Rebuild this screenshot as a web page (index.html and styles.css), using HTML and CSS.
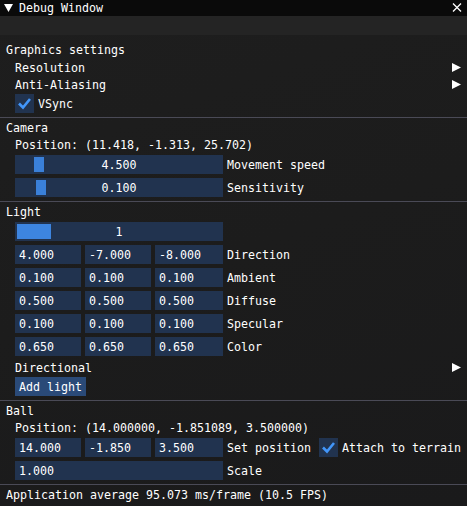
FILE: index.html
```html
<!DOCTYPE html>
<html>
<head>
<meta charset="utf-8">
<link rel="stylesheet" href="styles.css">
</head>
<body>
<div class="win">
  <div class="titlebar">
    <svg class="tri" width="9" height="8" viewBox="0 0 9 8"><polygon points="0,0 9,0 4.5,8" fill="#fff"/></svg>
    <span class="title">Debug Window</span>
    <svg class="close" width="10" height="9" viewBox="0 0 10 9"><path d="M1 0.5 L9 8.5 M9 0.5 L1 8.5" stroke="#fff" stroke-width="1.3" fill="none"/></svg>
  </div>
  <div class="menubar"></div>
  <div class="content">
    <div class="txt">Graphics settings</div>
    <div class="indent">
      <div class="menu-item"><span class="mtxt">Resolution</span><svg class="arrow" width="9" height="9" viewBox="0 0 9 9"><polygon points="0,0 9,4.5 0,9" fill="#fff"/></svg></div>
      <div class="menu-item"><span class="mtxt">Anti-Aliasing</span><svg class="arrow" width="9" height="9" viewBox="0 0 9 9"><polygon points="0,0 9,4.5 0,9" fill="#fff"/></svg></div>
      <div class="check-row">
        <span class="box"><svg width="19" height="19" viewBox="0 0 19 19"><path d="M4 9.5 L8 13.5 L15 5" stroke="#4296fa" stroke-width="2.6" fill="none"/></svg></span>
        <span class="lbl">VSync</span>
      </div>
    </div>
    <div class="sep"></div>
    <div class="txt">Camera</div>
    <div class="indent">
      <div class="txt">Position: (11.418, -1.313, 25.702)</div>
      <div class="row">
        <div class="frame slider wide"><span class="grab" style="left:19px"></span><span class="val">4.500</span></div>
        <span class="lbl">Movement speed</span>
      </div>
      <div class="row">
        <div class="frame slider wide"><span class="grab" style="left:21px"></span><span class="val">0.100</span></div>
        <span class="lbl">Sensitivity</span>
      </div>
    </div>
    <div class="sep"></div>
    <div class="txt">Light</div>
    <div class="indent">
      <div class="row">
        <div class="frame slider wide"><span class="grab grab-int" style="left:2px"></span><span class="val">1</span></div>
      </div>
      <div class="row">
        <div class="frame in w66">4.000</div><div class="frame in w66">-7.000</div><div class="frame in w68">-8.000</div>
        <span class="lbl">Direction</span>
      </div>
      <div class="row">
        <div class="frame in w66">0.100</div><div class="frame in w66">0.100</div><div class="frame in w68">0.100</div>
        <span class="lbl">Ambient</span>
      </div>
      <div class="row">
        <div class="frame in w66">0.500</div><div class="frame in w66">0.500</div><div class="frame in w68">0.500</div>
        <span class="lbl">Diffuse</span>
      </div>
      <div class="row">
        <div class="frame in w66">0.100</div><div class="frame in w66">0.100</div><div class="frame in w68">0.100</div>
        <span class="lbl">Specular</span>
      </div>
      <div class="row">
        <div class="frame in w66">0.650</div><div class="frame in w66">0.650</div><div class="frame in w68">0.650</div>
        <span class="lbl">Color</span>
      </div>
      <div class="menu-item"><span class="mtxt">Directional</span><svg class="arrow" width="9" height="9" viewBox="0 0 9 9"><polygon points="0,0 9,4.5 0,9" fill="#fff"/></svg></div>
      <div class="row">
        <div class="button">Add light</div>
      </div>
    </div>
    <div class="sep"></div>
    <div class="txt">Ball</div>
    <div class="indent">
      <div class="txt">Position: (14.000000, -1.851089, 3.500000)</div>
      <div class="row">
        <div class="frame in w66">14.000</div><div class="frame in w66">-1.850</div><div class="frame in w68">3.500</div>
        <span class="lbl">Set position</span>
        <span class="box box-gap"><svg width="19" height="19" viewBox="0 0 19 19"><path d="M4 9.5 L8 13.5 L15 5" stroke="#4296fa" stroke-width="2.6" fill="none"/></svg></span>
        <span class="lbl">Attach to terrain</span>
      </div>
      <div class="row">
        <div class="frame in wide">1.000</div>
        <span class="lbl">Scale</span>
      </div>
    </div>
    <div class="sep"></div>
    <div class="txt">Application average 95.073 ms/frame (10.5 FPS)</div>
  </div>
</div>
</body>
</html>
```

FILE: styles.css
```css
html, body {
  margin: 0;
  padding: 0;
  background: #1c1c1c;
}
body {
  width: 467px;
  height: 506px;
  overflow: hidden;
  font-family: "DejaVu Sans Mono", "Liberation Mono", monospace;
  font-size: 11.63px;
  line-height: 13px;
  color: #ffffff;
}
.win {
  width: 467px;
  height: 506px;
  background: linear-gradient(160deg, #1e1e1e 0%, #1c1c1c 50%, #1a1a1b 100%);
}
.titlebar {
  height: 16px;
  background: #0a0a0a;
  display: flex;
  align-items: flex-start;
  padding: 2px 5px 0 4px;
  box-sizing: border-box;
}
.tri {
  margin-top: 2px;
  flex: none;
}
.title {
  margin-left: 6px;
  flex: 1;
}
.close {
  margin-top: 1px;
}
.menubar {
  height: 19px;
  background: #242424;
}
.content {
  padding: 8px 6px 0 6px;
  display: flex;
  flex-direction: column;
  gap: 4px;
}
.indent {
  padding-left: 9px;
  display: flex;
  flex-direction: column;
  gap: 4px;
}
.txt {
  height: 12px;
  padding-top: 1px;
  white-space: pre;
}
.menu-item {
  height: 13px;
  display: flex;
  justify-content: space-between;
  align-items: center;
}
.mtxt {
  padding-top: 2px;
  height: 11px;
}
.arrow {
  margin-top: 1px;
}
.check-row {
  display: flex;
  align-items: center;
  gap: 4px;
  height: 19px;
}
.box {
  width: 19px;
  height: 19px;
  background: #21334f;
  display: block;
  flex: none;
}
.box svg {
  display: block;
}
.box-gap {
  margin-left: 4px;
}
.sep {
  height: 1px;
  background: #4a4a56;
  margin: 0 -6px -1px -6px;
}
.row {
  display: flex;
  align-items: center;
  gap: 4px;
  height: 19px;
  white-space: pre;
}
.lbl {
  flex: none;
  padding-top: 2px;
}
.frame {
  height: 19px;
  background: #21334f;
  box-sizing: border-box;
  line-height: 13px;
  padding: 4px 4px 2px 4px;
  flex: none;
}
.wide { width: 208px; }
.w66 { width: 66px; }
.w68 { width: 68px; }
.slider {
  position: relative;
  text-align: center;
}
.grab {
  position: absolute;
  top: 2px;
  width: 10px;
  height: 15px;
  background: #3a80d9;
}
.grab-int {
  width: 34px;
  background: #3d85e0;
}
.val {
  position: relative;
}
.button {
  height: 19px;
  box-sizing: border-box;
  padding: 4px 4px 2px 4px;
  background: #2a4a78;
}
```
